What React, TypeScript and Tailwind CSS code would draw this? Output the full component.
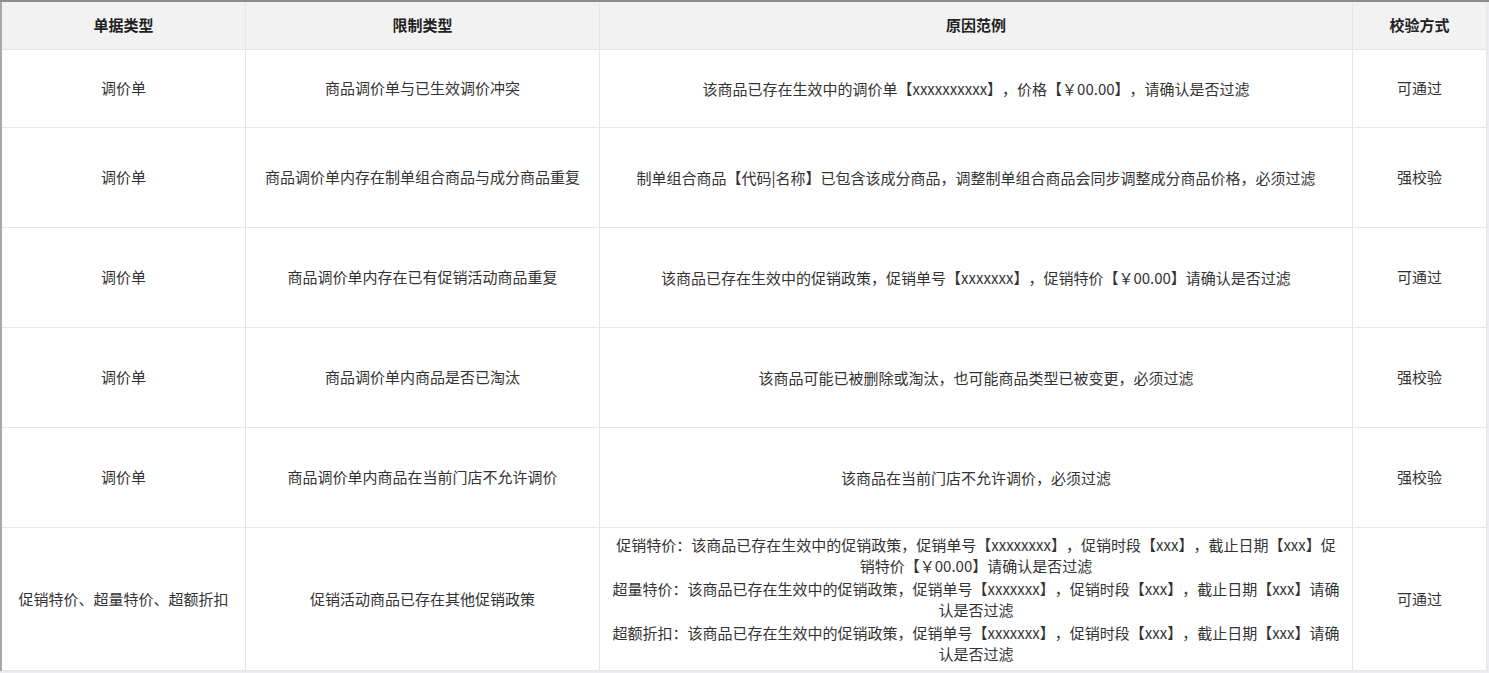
const rows: { type: string; limit: string; reason: string[]; check: string; h: string }[] = [
  {
    type: "调价单",
    limit: "商品调价单与已生效调价冲突",
    reason: ["该商品已存在生效中的调价单【xxxxxxxxxx】，价格【￥00.00】，请确认是否过滤"],
    check: "可通过",
    h: "h-[78px]",
  },
  {
    type: "调价单",
    limit: "商品调价单内存在制单组合商品与成分商品重复",
    reason: ["制单组合商品【代码|名称】已包含该成分商品，调整制单组合商品会同步调整成分商品价格，必须过滤"],
    check: "强校验",
    h: "h-[100px]",
  },
  {
    type: "调价单",
    limit: "商品调价单内存在已有促销活动商品重复",
    reason: ["该商品已存在生效中的促销政策，促销单号【xxxxxxx】，促销特价【￥00.00】请确认是否过滤"],
    check: "可通过",
    h: "h-[100px]",
  },
  {
    type: "调价单",
    limit: "商品调价单内商品是否已淘汰",
    reason: ["该商品可能已被删除或淘汰，也可能商品类型已被变更，必须过滤"],
    check: "强校验",
    h: "h-[100px]",
  },
  {
    type: "调价单",
    limit: "商品调价单内商品在当前门店不允许调价",
    reason: ["该商品在当前门店不允许调价，必须过滤"],
    check: "强校验",
    h: "h-[100px]",
  },
  {
    type: "促销特价、超量特价、超额折扣",
    limit: "促销活动商品已存在其他促销政策",
    reason: [
      "促销特价：该商品已存在生效中的促销政策，促销单号【xxxxxxxx】，促销时段【xxx】，截止日期【xxx】促销特价【￥00.00】请确认是否过滤",
      "超量特价：该商品已存在生效中的促销政策，促销单号【xxxxxxx】，促销时段【xxx】，截止日期【xxx】请确认是否过滤",
      "超额折扣：该商品已存在生效中的促销政策，促销单号【xxxxxxx】，促销时段【xxx】，截止日期【xxx】请确认是否过滤",
    ],
    check: "可通过",
    h: "h-[143px]",
  },
];

const cell = "flex items-center justify-center text-center border-r border-b border-[#e6e6e6] px-[9px]";

export default function App() {
  return (
    <div
      className="min-h-screen bg-[#ececee] border-t-2 border-[#8c8c8c] text-[15px] text-[#333] [text-spacing-trim:space-all]"
      style={{ fontFamily: '"Noto Sans CJK SC", "Noto Sans", sans-serif' }}
    >
      <div className="w-[1487px] bg-white border-l-2 border-[#a9a9a9] grid grid-cols-[244px_354px_753px_134px]">
        {["单据类型", "限制类型", "原因范例", "校验方式"].map((t) => (
          <div key={t} className={`${cell} h-[48px] bg-[#f2f2f2] font-bold text-[#222]`}>
            {t}
          </div>
        ))}
        {rows.map((r, i) => (
          <div key={i} className="contents">
            <div className={`${cell} ${r.h}`}>{r.type}</div>
            <div className={`${cell} ${r.h}`}>{r.limit}</div>
            <div className={`${cell} ${r.h} flex-col leading-[21px]`}>
              {r.reason.map((p, j) => (
                <p key={j} className={j > 0 ? "mt-[2px]" : ""}>
                  {p}
                </p>
              ))}
            </div>
            <div className={`${cell} ${r.h}`}>{r.check}</div>
          </div>
        ))}
      </div>
    </div>
  );
}
